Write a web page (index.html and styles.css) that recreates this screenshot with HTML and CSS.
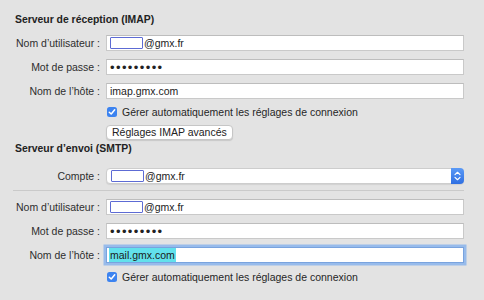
FILE: index.html
```html
<!DOCTYPE html>
<html lang="fr">
<head>
    <meta charset="UTF-8">
    <meta name="viewport" content="width=device-width, initial-scale=1.0">
    <title>Réglages du serveur</title>
    <link rel="stylesheet" href="styles.css">
</head>
<body>

    <div class="pane">
        <!-- Incoming server -->
        <h2 class="section-title">Serveur de réception (IMAP)</h2>

        <div class="row">
            <span class="lbl">Nom d’utilisateur :</span>
            <div class="field"><span class="redact"></span>@gmx.fr</div>
        </div>
        <div class="row">
            <span class="lbl">Mot de passe :</span>
            <div class="field dots">•••••••••</div>
        </div>
        <div class="row">
            <span class="lbl">Nom de l’hôte :</span>
            <div class="field">imap.gmx.com</div>
        </div>
        <div class="row check-row">
            <span class="lbl"></span>
            <label class="check">
                <span class="box"><svg width="8" height="8" viewBox="0 0 8 8"><path d="M1.3 4.2 L3.2 6 L6.7 1.8" fill="none" stroke="#fff" stroke-width="1.5" stroke-linecap="round" stroke-linejoin="round"/></svg></span>
                Gérer automatiquement les réglages de connexion
            </label>
        </div>
        <div class="row button-row">
            <span class="lbl"></span>
            <button class="btn">Réglages IMAP avancés</button>
        </div>

        <!-- Outgoing server -->
        <h2 class="section-title smtp">Serveur d’envoi (SMTP)</h2>

        <div class="row select-row">
            <span class="lbl">Compte :</span>
            <div class="field select">
                <span class="select-value"><span class="redact"></span>@gmx.fr</span>
                <span class="stepper"><svg width="7" height="10" viewBox="0 0 7 10"><path d="M1 3.6 L3.5 1.3 L6 3.6 M1 6.4 L3.5 8.7 L6 6.4" fill="none" stroke="#fff" stroke-width="1.2" stroke-linecap="round" stroke-linejoin="round"/></svg></span>
            </div>
        </div>

        <div class="separator"></div>

        <div class="row">
            <span class="lbl">Nom d’utilisateur :</span>
            <div class="field"><span class="redact"></span>@gmx.fr</div>
        </div>
        <div class="row">
            <span class="lbl">Mot de passe :</span>
            <div class="field dots">•••••••••</div>
        </div>
        <div class="row focus-row">
            <span class="lbl">Nom de l’hôte :</span>
            <div class="field focused"><span class="selected">mail.gmx.com</span></div>
        </div>
        <div class="row check-row last">
            <span class="lbl"></span>
            <label class="check">
                <span class="box"><svg width="8" height="8" viewBox="0 0 8 8"><path d="M1.3 4.2 L3.2 6 L6.7 1.8" fill="none" stroke="#fff" stroke-width="1.5" stroke-linecap="round" stroke-linejoin="round"/></svg></span>
                Gérer automatiquement les réglages de connexion
            </label>
        </div>
    </div>

</body>
</html>
```

FILE: styles.css
```css
body {
    margin: 0;
    background-color: #e3e3e3;
    font-family: "Liberation Sans", Arial, sans-serif;
    font-size: 10.5px;
    color: #262626;
}

.pane {
    width: 464px;
    padding-top: 13px;
}

.section-title {
    margin: 0 0 0 15px;
    font-size: 10.4px;
    line-height: 14px;
    font-weight: bold;
    color: #222;
}

.section-title.smtp {
    margin-top: 2px;
}

.row {
    display: flex;
    align-items: center;
    height: 16px;
    margin-top: 8px;
}

.lbl {
    width: 106px;
    flex: none;
    text-align: right;
    padding-right: 6px;
    box-sizing: border-box;
    white-space: nowrap;
    color: #2e2e2e;
}

.field {
    flex: 1;
    height: 16px;
    box-sizing: border-box;
    background-color: #fff;
    border: 1px solid #c9c9c9;
    border-top-color: #bdbdbd;
    padding-left: 3px;
    display: flex;
    align-items: center;
    white-space: nowrap;
    color: #222;
}

.redact {
    display: inline-block;
    width: 31px;
    height: 10px;
    border: 1.5px solid #5d6bd4;
    border-radius: 1px;
    background-color: #fff;
    margin-right: 1px;
}

.dots {
    font-size: 13px;
    letter-spacing: 1.4px;
    padding-left: 3px;
    color: #222;
}

.check-row {
    margin-top: 5px;
}

.check {
    display: flex;
    align-items: center;
    gap: 5px;
    padding-left: 1px;
    white-space: nowrap;
}

.box {
    width: 10px;
    height: 10px;
    border-radius: 2.5px;
    background-color: #3c83f0;
    display: flex;
    align-items: center;
    justify-content: center;
}

.button-row {
    margin-top: 5px;
    height: 15px;
}

.btn {
    height: 15px;
    padding: 0 5px;
    font-family: "Liberation Sans", Arial, sans-serif;
    font-size: 10.5px;
    line-height: 13px;
    color: #222;
    background-color: #fff;
    border: 1px solid #c6c6c6;
    border-radius: 4px;
    box-shadow: 0 1px 1px rgba(0, 0, 0, 0.12);
}

.select-row {
    margin-top: 12px;
}

.select {
    border-radius: 4px;
    padding-left: 4px;
    padding-right: 0;
    border-color: #cdcdcd;
    box-shadow: 0 1px 1px rgba(0, 0, 0, 0.08);
}

.select-value {
    flex: 1;
    display: flex;
    align-items: center;
}

.stepper {
    width: 13px;
    height: 16px;
    margin: -1px -1px -1px 0;
    border-radius: 0 4px 4px 0;
    background: linear-gradient(#5b9af6, #2f6fe2);
    display: flex;
    align-items: center;
    justify-content: center;
}

.separator {
    height: 1px;
    margin: 6px 0 0 13px;
    background-color: #cacaca;
}

.focus-row {
    margin-top: 8px;
}

.focused {
    border-color: #79a3de;
    box-shadow: 0 0 0 2.5px #97bbeb;
    padding-left: 2px;
}

.selected {
    background-color: #62e1ec;
    color: #1a1a1a;
    padding: 1px 1px;
}

.check-row.last {
    margin-top: 6px;
}
```
